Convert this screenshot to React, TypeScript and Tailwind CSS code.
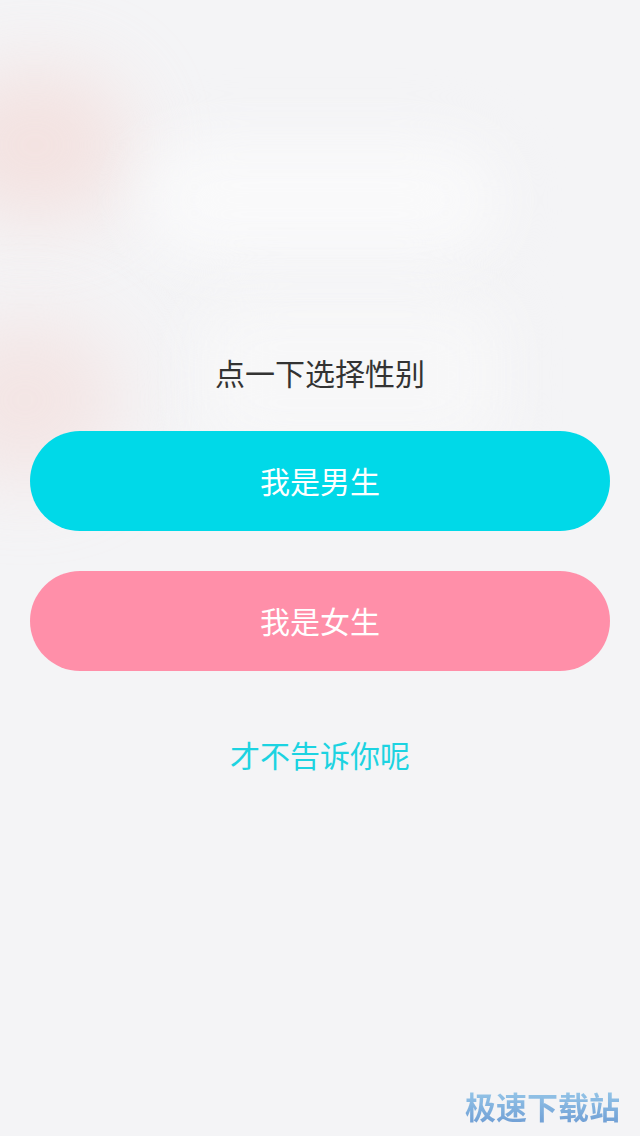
import React from "react";

const font = { fontFamily: '"Noto Sans CJK SC", "Noto Sans", sans-serif' };

export default function App() {
  return (
    <div
      className="relative w-[640px] h-[1136px] overflow-hidden bg-[#f4f4f6]"
      style={font}
    >
      {/* blurred background decorations */}
      <div className="absolute left-[-60px] top-[70px] w-[190px] h-[150px] rounded-full bg-[#f3d6d2] blur-[40px] opacity-60" />
      <div className="absolute left-[-70px] top-[320px] w-[190px] h-[160px] rounded-full bg-[#f3d9d6] blur-[40px] opacity-55" />
      <div className="absolute left-[140px] top-[140px] w-[360px] h-[120px] rounded-full bg-[#f9f9fa] blur-[30px]" />
      <div className="absolute left-[200px] top-[300px] w-[300px] h-[150px] rounded-[40px] bg-[#f7f7f8] blur-[30px]" />

      <div className="relative flex flex-col items-center pt-[350px]">
        <div className="text-[30px] leading-[44px] text-[#333333]">点一下选择性别</div>
        <div className="mt-[37px] w-[580px] h-[100px] rounded-full bg-[#00d9e8] flex items-center justify-center text-[30px] text-white">
          <span className="-mt-[2px]">我是男生</span>
        </div>
        <div className="mt-[40px] w-[580px] h-[100px] rounded-full bg-[#ff8fa9] flex items-center justify-center text-[30px] text-white">
          <span className="-mt-[2px]">我是女生</span>
        </div>
        <div className="mt-[61px] text-[30px] leading-[44px] text-[#1cd3e1]">才不告诉你呢</div>
      </div>

      <div className="absolute right-[20px] top-[1084px] text-[31px] font-semibold leading-[44px] bg-gradient-to-b from-[#9ccdec] to-[#6c9ad2] bg-clip-text text-transparent">
        极速下载站
      </div>
    </div>
  );
}
